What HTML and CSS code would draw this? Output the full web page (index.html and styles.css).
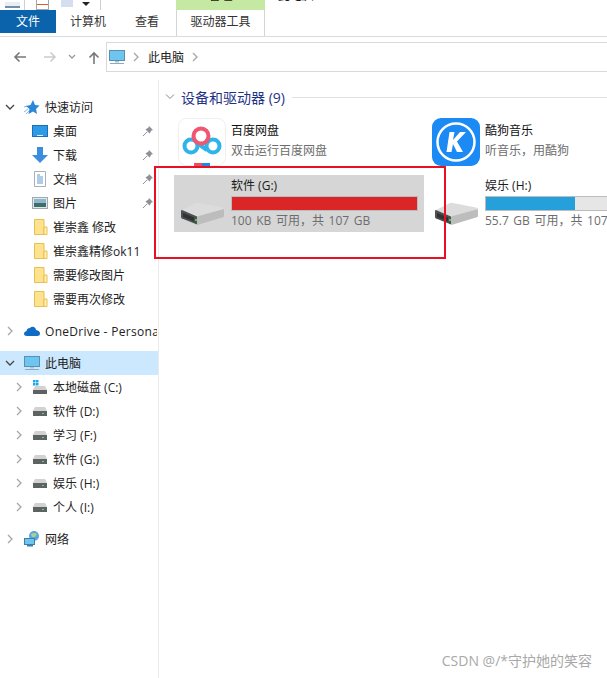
FILE: index.html
```html
<!DOCTYPE html>
<html>
<head>
    <title>此电脑</title>
    <link rel="stylesheet" href="styles.css">
</head>
<body>
    <svg class="defs" width="0" height="0">
        <symbol id="drive" viewBox="0 0 43 23">
            <path d="M1 8 L15 1 Q16 0.500 18 1 L41 5.500 Q43 6 43 7 L17 15 Z" fill="#dcdcdc"/>
            <path d="M0 9 Q0 8 1 8 L16 14.500 L16 22.500 L1 16.500 Q0 16 0 15 Z" fill="#4d5052"/>
            <path d="M16 14.500 L43 7 L43 14 Q43 15 41 15.500 L18 22.500 Q17 23 16 22.500 Z" fill="#bdbdbd"/>
            <path d="M2 11 L13 15.500 L13 19.500 L2 15 Z" fill="#303234"/>
            <rect x="14" y="17" width="2" height="2" fill="#3fd24d"/>
        </symbol>
        <symbol id="small-drive" viewBox="0 0 14 9">
            <path d="M2 0 H12 L14 4 H0 Z" fill="#d2d2d2"/>
            <rect x="0" y="4" width="14" height="5" fill="#5f6264"/>
            <rect x="9" y="6" width="2" height="1" fill="#55e06a"/>
        </symbol>
        <symbol id="monitor" viewBox="0 0 16 16">
            <rect x="0.500" y="1.500" width="15" height="10" fill="#6ec6f0" stroke="#5a8fb0"/>
            <rect x="6" y="12" width="4" height="1.500" fill="#a9c4d6"/>
            <rect x="1" y="14" width="14" height="1" fill="#8fa9bb"/>
        </symbol>
        <symbol id="folder" viewBox="0 0 14 16">
            <path d="M0.500 0.500 H10 V15.500 H0.500 Z" fill="#fde28f" stroke="#e8c04f"/>
            <path d="M10 8 H13 V15.500 H10 Z" fill="#fff1b8" stroke="#e8c04f"/>
        </symbol>
        <symbol id="pin" viewBox="0 0 12 12">
            <path d="M7 1 L11 5 L9.500 5.500 L7.500 8.500 L3.500 4.500 L6.500 2.500 Z" fill="#8d9299"/>
            <path d="M5 7 L1 11" stroke="#8d9299" fill="none"/>
        </symbol>
        <symbol id="chev-right" viewBox="0 0 8 10">
            <path d="M2 1 L6 5 L2 9" stroke="#a6a6a6" stroke-width="1.300" fill="none"/>
        </symbol>
        <symbol id="chev-down" viewBox="0 0 10 8">
            <path d="M1 2 L5 6 L9 2" stroke="#444" stroke-width="1.300" fill="none"/>
        </symbol>
    </svg>

    <div class="titlebar">
        <div class="qa-icons">
            <span class="qa-a"></span>
            <span class="qa-sep"></span>
            <span class="qa-b"></span>
            <span class="qa-c"></span>
            <span class="qa-arrow"></span>
            <span class="qa-sep"></span>
        </div>
        <div class="context-tab"><span>管理</span></div>
        <div class="window-title"><span>此电脑</span></div>
    </div>

    <div class="ribbon">
        <div class="tab tab-file">文件</div>
        <div class="tab tab-computer">计算机</div>
        <div class="tab tab-view">查看</div>
        <div class="tab tab-tools">驱动器工具</div>
    </div>

    <div class="navbar">
        <div class="nav-buttons">
            <svg width="14" height="12" viewBox="0 0 14 12"><path d="M13 6 H2 M6.500 1.500 L2 6 L6.500 10.500" stroke="#777" stroke-width="1.600" fill="none"/></svg>
            <svg class="nav-forward" width="14" height="12" viewBox="0 0 14 12"><path d="M1 6 H12 M7.500 1.500 L12 6 L7.500 10.500" stroke="#ccc" stroke-width="1.600" fill="none"/></svg>
            <svg class="nav-recent" width="8" height="6" viewBox="0 0 8 6"><path d="M1 1 L4 4 L7 1" stroke="#999" stroke-width="1.300" fill="none"/></svg>
            <svg class="nav-up" width="12" height="13" viewBox="0 0 12 13"><path d="M6 13 V2 M1.500 6.500 L6 2 L10.500 6.500" stroke="#777" stroke-width="1.600" fill="none"/></svg>
        </div>
        <div class="address">
            <svg class="address-icon" width="16" height="16"><use href="#monitor"/></svg>
            <svg class="crumb-arrow" width="8" height="10"><use href="#chev-right"/></svg>
            <span class="crumb">此电脑</span>
            <svg class="crumb-arrow" width="8" height="10"><use href="#chev-right"/></svg>
        </div>
    </div>

    <div class="main">
        <nav class="sidebar">
            <div class="row head">
                <svg class="toggle" width="10" height="8"><use href="#chev-down"/></svg>
                <svg class="row-icon" width="16" height="16" viewBox="0 0 16 16"><path d="M0 13 L4 10 M0 8 L3 7 M2 15 L5 12" stroke="#7db9ea" fill="none"/><path d="M9 1 L11 6 L15.500 6.500 L12 10 L13 15 L9 12.500 L4.500 15 L5.500 10 L2 7 L6.500 6 Z" fill="#2b88d8"/></svg>
                <span>快速访问</span>
            </div>
            <div class="row sub">
                <svg class="row-icon" width="16" height="16" viewBox="0 0 16 16"><rect x="0.500" y="2.500" width="15" height="11" fill="#2f9be8" stroke="#1b6fb5"/><rect x="5" y="12" width="6" height="1" fill="#dff1ff"/></svg>
                <span>桌面</span>
                <svg class="pin" width="12" height="12"><use href="#pin"/></svg>
            </div>
            <div class="row sub">
                <svg class="row-icon" width="16" height="16" viewBox="0 0 16 16"><path d="M5 0 H11 V8 H16 L8 16 L0 8 H5 Z" fill="#3b8ede"/></svg>
                <span>下载</span>
                <svg class="pin" width="12" height="12"><use href="#pin"/></svg>
            </div>
            <div class="row sub">
                <svg class="row-icon" width="16" height="16" viewBox="0 0 16 16"><path d="M2.500 0.500 H13.500 V15.500 H2.500 Z" fill="#fff" stroke="#a9b0b6"/><path d="M5 4 H8 M5 6 H11 M5 8 H11 M5 10 H11 M5 12 H11" stroke="#5b9bd5"/></svg>
                <span>文档</span>
                <svg class="pin" width="12" height="12"><use href="#pin"/></svg>
            </div>
            <div class="row sub">
                <svg class="row-icon" width="16" height="16" viewBox="0 0 16 16"><rect x="0.500" y="2.500" width="15" height="11" fill="#dfe8ec" stroke="#a2a8ad"/><rect x="2" y="4" width="12" height="4" fill="#8fb8cf"/><rect x="2" y="8" width="12" height="4" fill="#3f6e6a"/></svg>
                <span>图片</span>
                <svg class="pin" width="12" height="12"><use href="#pin"/></svg>
            </div>
            <div class="row sub">
                <svg class="row-icon" width="14" height="16"><use href="#folder"/></svg>
                <span>崔崇鑫 修改</span>
            </div>
            <div class="row sub">
                <svg class="row-icon" width="14" height="16"><use href="#folder"/></svg>
                <span>崔崇鑫精修ok11</span>
            </div>
            <div class="row sub">
                <svg class="row-icon" width="14" height="16"><use href="#folder"/></svg>
                <span>需要修改图片</span>
            </div>
            <div class="row sub">
                <svg class="row-icon" width="14" height="16"><use href="#folder"/></svg>
                <span>需要再次修改</span>
            </div>

            <div class="row head group-gap">
                <svg class="toggle" width="8" height="10"><use href="#chev-right"/></svg>
                <svg class="row-icon" width="16" height="16" viewBox="0 0 16 16"><path d="M3 13 Q0 13 0 10.500 Q0 8.500 2.500 8 Q3 5 6 5 Q7.500 3 10 4 Q12 5 12 7 Q16 7.500 16 10.500 Q16 13 13 13 Z" fill="#0f6cc4"/></svg>
                <span class="clip">OneDrive - Personal</span>
            </div>

            <div class="row head group-gap selected">
                <svg class="toggle" width="10" height="8"><use href="#chev-down"/></svg>
                <svg class="row-icon" width="16" height="16"><use href="#monitor"/></svg>
                <span>此电脑</span>
            </div>
            <div class="row drive-row">
                <svg class="toggle" width="8" height="10"><use href="#chev-right"/></svg>
                <svg class="row-icon" width="14" height="14" viewBox="0 0 14 14"><rect x="0" y="0" width="2.500" height="2.500" fill="#1aa7ec"/><rect x="3" y="0" width="2.500" height="2.500" fill="#1aa7ec"/><rect x="0" y="3" width="2.500" height="2.500" fill="#1aa7ec"/><rect x="3" y="3" width="2.500" height="2.500" fill="#1aa7ec"/><path d="M2 6 H12 L14 10 H0 Z" fill="#d2d2d2"/><rect x="0" y="10" width="14" height="4" fill="#5f6264"/></svg>
                <span>本地磁盘 (C:)</span>
            </div>
            <div class="row drive-row">
                <svg class="toggle" width="8" height="10"><use href="#chev-right"/></svg>
                <svg class="row-icon small-drive" width="14" height="9"><use href="#small-drive"/></svg>
                <span>软件 (D:)</span>
            </div>
            <div class="row drive-row">
                <svg class="toggle" width="8" height="10"><use href="#chev-right"/></svg>
                <svg class="row-icon small-drive" width="14" height="9"><use href="#small-drive"/></svg>
                <span>学习 (F:)</span>
            </div>
            <div class="row drive-row">
                <svg class="toggle" width="8" height="10"><use href="#chev-right"/></svg>
                <svg class="row-icon small-drive" width="14" height="9"><use href="#small-drive"/></svg>
                <span>软件 (G:)</span>
            </div>
            <div class="row drive-row">
                <svg class="toggle" width="8" height="10"><use href="#chev-right"/></svg>
                <svg class="row-icon small-drive" width="14" height="9"><use href="#small-drive"/></svg>
                <span>娱乐 (H:)</span>
            </div>
            <div class="row drive-row">
                <svg class="toggle" width="8" height="10"><use href="#chev-right"/></svg>
                <svg class="row-icon small-drive" width="14" height="9"><use href="#small-drive"/></svg>
                <span>个人 (I:)</span>
            </div>

            <div class="row head group-gap">
                <svg class="toggle" width="8" height="10"><use href="#chev-right"/></svg>
                <svg class="row-icon" width="16" height="16" viewBox="0 0 16 16"><circle cx="10" cy="5" r="5" fill="#5aa7dd"/><path d="M7 3 Q10 1 13 3 L11 6 L8 6 Z" fill="#a7d28d"/><rect x="0.500" y="7.500" width="10" height="6" fill="#6ec6f0" stroke="#3d7fa8"/><rect x="3" y="14" width="6" height="1.500" fill="#3d7fa8"/></svg>
                <span>网络</span>
            </div>
        </nav>

        <section class="content">
            <div class="group-title">
                <svg width="10" height="8" viewBox="0 0 10 8"><path d="M1 1.500 L5 5.500 L9 1.500" stroke="#888" stroke-width="1" fill="none"/></svg>
                <span>设备和驱动器 (9)</span>
                <i class="group-line"></i>
            </div>

            <div class="tiles">
                <div class="tile app-tile">
                    <svg class="app-icon" width="48" height="48" viewBox="0 0 48 48">
                        <rect x="0.500" y="0.500" width="47" height="47" rx="8" fill="#fff" stroke="#eee"/>
                        <rect x="16" y="45" width="8" height="3" fill="#ef4a5e"/>
                        <rect x="24" y="45" width="8" height="3" fill="#1e88e5"/>
                        <circle cx="13" cy="28" r="6.500" fill="none" stroke="#2fb4ea" stroke-width="4"/>
                        <circle cx="35" cy="28" r="6.500" fill="none" stroke="#2fb4ea" stroke-width="4"/>
                        <path d="M19 25 L29 32" stroke="#2fb4ea" stroke-width="4"/>
                        <circle cx="23" cy="18" r="7.500" fill="none" stroke="#f0566f" stroke-width="4"/>
                    </svg>
                    <div class="tile-text">
                        <div class="tile-name">百度网盘</div>
                        <div class="tile-desc">双击运行百度网盘</div>
                    </div>
                </div>
                <div class="tile app-tile">
                    <svg class="app-icon" width="48" height="48" viewBox="0 0 48 48">
                        <rect width="48" height="48" rx="9" fill="#1c8af5"/>
                        <circle cx="24" cy="24" r="18.500" fill="none" stroke="#fff" stroke-width="2.500"/>
                        <path d="M17.500 14 H22.500 L21 22 L28 14 H34 L25 23.500 L31 34 H25 L21 26 L19.500 34 H14.500 Z" fill="#fff"/>
                    </svg>
                    <div class="tile-text">
                        <div class="tile-name">酷狗音乐</div>
                        <div class="tile-desc">听音乐，用酷狗</div>
                    </div>
                </div>
                <div class="tile drive-tile selected-tile">
                    <svg class="drive-icon" width="43" height="23"><use href="#drive"/></svg>
                    <div class="tile-text">
                        <div class="drive-name">软件 (G:)</div>
                        <div class="bar"><div class="bar-fill full" style="width:100%"></div></div>
                        <div class="drive-size">100 KB 可用，共 107 GB</div>
                    </div>
                </div>
                <div class="tile drive-tile">
                    <svg class="drive-icon" width="43" height="23"><use href="#drive"/></svg>
                    <div class="tile-text">
                        <div class="drive-name">娱乐 (H:)</div>
                        <div class="bar"><div class="bar-fill" style="width:48%"></div></div>
                        <div class="drive-size">55.7 GB 可用，共 107 GB</div>
                    </div>
                </div>
            </div>
        </section>
    </div>

    <div class="red-box"></div>
    <div class="watermark">CSDN @/*守护她的笑容</div>
</body>
</html>
```

FILE: styles.css
```css
html, body {
    margin: 0;
    height: 100%;
}

body {
    position: relative;
    width: 607px;
    height: 678px;
    overflow: hidden;
    background: #fff;
    color: #1a1a1a;
    font-family: "Open Sans", "Noto Sans CJK SC", sans-serif;
    font-size: 12px;
}

svg {
    display: block;
    flex: none;
}

.defs {
    position: absolute;
}

/* title bar, mostly cut off at the top */
.titlebar {
    display: flex;
    height: 10px;
    overflow: hidden;
}

.qa-icons {
    display: flex;
    width: 176px;
    height: 10px;
}

.qa-a {
    width: 15px;
    height: 4px;
    margin: 2px 0 0 5px;
    border-bottom: 2px solid #6f8fb0;
    background: #e8eef4;
}

.qa-sep {
    width: 1px;
    height: 10px;
    margin-left: 4px;
    background: #d0d0d0;
}

.qa-sep + .qa-b {
    margin-left: 11px;
}

.qa-b {
    width: 11px;
    height: 9px;
    border: 1px solid #a5a5a5;
    border-top: none;
    background: linear-gradient(#fff 40%, #e25c2b 40%, #e25c2b 60%, #fff 60%);
}

.qa-c {
    width: 12px;
    height: 7px;
    margin-left: 12px;
    background: #d5deef;
}

.qa-arrow {
    width: 0;
    height: 0;
    margin: 2px 0 0 9px;
    border: 4px solid transparent;
    border-top-color: #222;
}

.qa-arrow + .qa-sep {
    margin-left: 10px;
}

.context-tab {
    display: flex;
    justify-content: center;
    align-items: flex-end;
    width: 89px;
    height: 10px;
    background: #c5e8a2;
}

.context-tab span,
.window-title span {
    display: block;
    flex: none;
    line-height: 16px;
    margin-bottom: 6px;
}

.window-title {
    display: flex;
    align-items: flex-end;
    height: 10px;
    padding-left: 13px;
}

/* ribbon tabs */
.ribbon {
    display: flex;
    height: 26px;
    border-bottom: 1px solid #dadbdc;
}

.tab {
    height: 23px;
    line-height: 23px;
    text-align: center;
    color: #333;
}

.tab-file {
    width: 56px;
    background: #0b63ac;
    color: #fff;
}

.tab-computer {
    width: 50px;
    margin-left: 7px;
}

.tab-view {
    width: 24px;
    margin-left: 22px;
}

.tab-tools {
    width: 87px;
    height: 26px;
    margin-left: 17px;
    border-left: 1px solid #d5d5d5;
    border-right: 1px solid #d5d5d5;
    line-height: 23px;
}

/* back/forward and address */
.navbar {
    display: flex;
    align-items: center;
    height: 30px;
    margin-top: 5px;
}

.nav-buttons {
    display: flex;
    align-items: center;
    width: 106px;
    padding-left: 13px;
    box-sizing: border-box;
}

.nav-forward {
    margin-left: 16px;
}

.nav-recent {
    margin-left: 11px;
}

.nav-up {
    margin-left: 12px;
}

.address {
    display: flex;
    align-items: center;
    flex: 1;
    height: 30px;
    box-sizing: border-box;
    padding-left: 2px;
    border: 1px solid #d9d9d9;
    border-right: none;
}

.crumb-arrow {
    margin-left: 7px;
}

.crumb {
    margin-left: 8px;
    color: #222;
}

/* left tree and content */
.main {
    display: flex;
    margin-top: 8px;
}

.sidebar {
    width: 158px;
    height: 598px;
    padding-top: 15px;
    border-right: 1px solid #eaeaea;
}

.row {
    position: relative;
    display: flex;
    align-items: center;
    height: 24px;
    white-space: nowrap;
    color: #222;
}

.row.head {
    padding-left: 5px;
}

.row.sub {
    padding-left: 32px;
}

.row.drive-row {
    padding-left: 14px;
}

.row.group-gap {
    margin-top: 8px;
}

.row.selected {
    background: #cce8ff;
}

.toggle {
    width: 10px;
}

.head .row-icon {
    margin-left: 9px;
    margin-right: 5px;
}

.sub .row-icon {
    margin-right: 5px;
}

.sub svg[width="14"] {
    margin-left: 2px;
    margin-right: 5px;
}

.drive-row .toggle {
    width: 10px;
}

.drive-row .row-icon {
    margin-left: 9px;
    margin-right: 6px;
}

.pin {
    position: absolute;
    left: 142px;
    top: 6px;
}

.clip {
    width: 112px;
    overflow: hidden;
    letter-spacing: 0.3px;
}

.content {
    flex: 1;
    min-width: 0;
}

.group-title {
    display: flex;
    align-items: center;
    height: 22px;
    margin-top: 6px;
    padding-left: 6px;
}

.group-title span {
    margin-left: 6px;
    font-size: 14px;
    color: #1e3287;
    white-space: nowrap;
}

.group-line {
    flex: 1;
    height: 1px;
    margin-left: 7px;
    background: #e2e2e2;
}

.tiles {
    display: grid;
    grid-template-columns: 250px 250px;
    column-gap: 4px;
    grid-auto-rows: 57px;
    padding-left: 15px;
    margin-top: 10px;
}

.tile {
    display: flex;
    white-space: nowrap;
}

.app-icon {
    margin: 0 0 0 4px;
}

.app-tile .tile-text {
    margin-left: 5px;
    padding-top: 3px;
}

.tile-name {
    line-height: 20px;
    color: #111;
}

.tile-desc {
    margin-top: 1px;
    line-height: 18px;
    color: #6d6d6d;
}

.drive-tile {
    align-items: flex-start;
}

.selected-tile {
    background: #d6d6d6;
}

.drive-icon {
    margin: 27px 0 0 7px;
}

.drive-tile .tile-text {
    margin-left: 7px;
    width: 187px;
}

.drive-name {
    height: 21px;
    line-height: 22px;
}

.bar {
    height: 15px;
    box-sizing: border-box;
    border: 1px solid #bcbcbc;
    background: #e6e6e6;
}

.bar-fill {
    height: 100%;
    background: #26a0da;
}

.bar-fill.full {
    background: #da2626;
}

.drive-size {
    margin-top: 1px;
    line-height: 18px;
    word-spacing: 1.5px;
    color: #6d6d6d;
}

/* red mark drawn over the shot */
.red-box {
    position: absolute;
    left: 154px;
    top: 166px;
    width: 288px;
    height: 89px;
    border: 2px solid #e81123;
}

.watermark {
    position: absolute;
    right: 15px;
    top: 651px;
    font-size: 14px;
    line-height: 20px;
    color: #a8a8a8;
    white-space: nowrap;
}
```
